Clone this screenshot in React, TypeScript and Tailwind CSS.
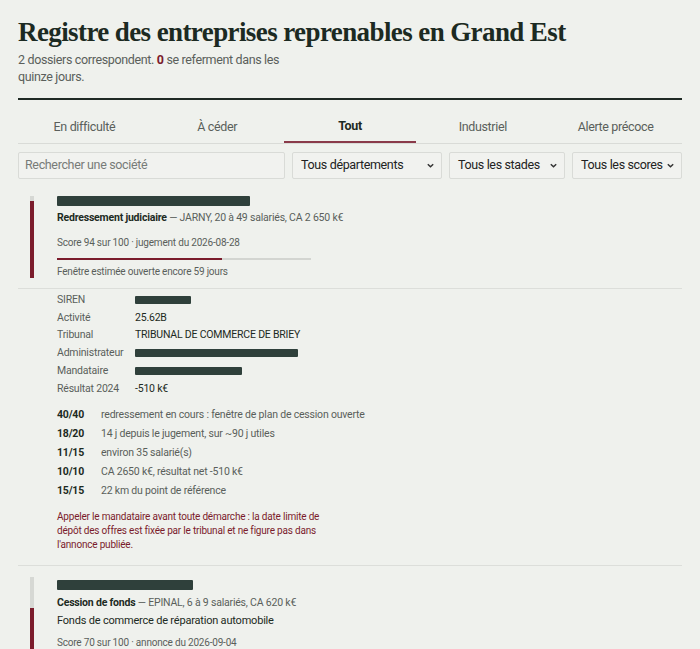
const tabs = ["En difficulté", "À céder", "Tout", "Industriel", "Alerte précoce"];

const details = [
  { label: "SIREN", redact: 56 },
  { label: "Activité", value: "25.62B" },
  { label: "Tribunal", value: "TRIBUNAL DE COMMERCE DE BRIEY" },
  { label: "Administrateur", redact: 163 },
  { label: "Mandataire", redact: 107 },
  { label: "Résultat 2024", value: "-510 k€" },
];

const scores = [
  { pts: "40/40", text: "redressement en cours : fenêtre de plan de cession ouverte" },
  { pts: "18/20", text: "14 j depuis le jugement, sur ~90 j utiles" },
  { pts: "11/15", text: "environ 35 salarié(s)" },
  { pts: "10/10", text: "CA 2650 k€, résultat net -510 k€" },
  { pts: "15/15", text: "22 km du point de référence" },
];

const Redacted = ({ width, height = 10 }: { width: number; height?: number }) => (
  <span
    className="inline-block bg-[#2f403b] rounded-[1px] align-middle"
    style={{ width, height }}
  />
);

const ScoreBar = ({ score }: { score: number }) => (
  <div className="w-[4px] ml-[12px] mr-[23px] flex flex-col shrink-0">
    <div className="bg-[#d6d8d4]" style={{ height: `${100 - score}%` }} />
    <div className="bg-[#7b1c2c] flex-1" />
  </div>
);

const Select = ({ label, width }: { label: string; width: string }) => (
  <div
    className={`${width} h-[27px] border border-[#d9dbd7] bg-[#f1f2ef] rounded-[2px] flex items-center justify-between pl-[8px] pr-[6px] text-[12.5px] tracking-[-0.35px] text-[#222] whitespace-nowrap`}
  >
    <span>{label}</span>
    <svg width="9" height="9" viewBox="0 0 10 10" fill="none">
      <path d="M2 3.5 L5 6.5 L8 3.5" stroke="#333" strokeWidth="1.6" />
    </svg>
  </div>
);

export default function App() {
  return (
    <div
      className="min-h-screen bg-[#eff1ed] px-[18px] pt-[14px] text-[#1c2a22]"
      style={{ fontFamily: "Roboto, 'Liberation Sans', sans-serif" }}
    >
      <h1
        className="text-[27px] font-bold leading-[36px] tracking-[-0.6px]"
        style={{ fontFamily: "'Liberation Serif', 'Times New Roman', serif" }}
      >
        Registre des entreprises reprenables en Grand Est
      </h1>
      <p className="mt-[1px] text-[12.5px] tracking-[-0.35px] leading-[17px] text-[#5a5f5b] max-w-[262px]">
        2 dossiers correspondent. <b className="text-[#7b1c2c] font-bold">0</b> se referment dans les quinze
        jours.
      </p>

      <div className="mt-[13px] h-[2px] bg-[#1f2a24]" />

      <div className="mt-[11px] grid grid-cols-5 border-b border-[#d9dbd7] text-[12.5px] tracking-[-0.35px]">
        {tabs.map((t) => (
          <div
            key={t}
            className={`h-[32px] flex items-center justify-center ${
              t === "Tout"
                ? "font-bold text-[#1c2a22] border-b-2 border-[#8a3a4a] -mb-px"
                : "text-[#5a5f5b]"
            }`}
          >
            {t}
          </div>
        ))}
      </div>

      <div className="mt-[8px] flex gap-[7px]">
        <div className="w-[267px] h-[27px] border border-[#d9dbd7] bg-[#f1f2ef] rounded-[2px] flex items-center px-[6px] text-[12.5px] tracking-[-0.35px] text-[#777b78]">
          Rechercher une société
        </div>
        <Select label="Tous départements" width="w-[150px]" />
        <Select label="Tous les stades" width="w-[116px]" />
        <Select label="Tous les scores" width="w-[110px]" />
      </div>

      {/* card 1 */}
      <div className="mt-[17px] flex">
        <ScoreBar score={94} />
        <div className="flex flex-col">
          <Redacted width={193} />
          <div className="mt-[5px] text-[10.5px] tracking-[-0.2px] leading-[13px] text-[#5a5f5b]">
            <b className="font-bold text-[#1c2a22]">Redressement judiciaire</b> — JARNY, 20 à 49 salariés, CA 2 650 k€
          </div>
          <div className="mt-[12px] text-[10px] tracking-[-0.2px] leading-[13px] text-[#5a5f5b]">
            Score 94 sur 100 · jugement du 2026-08-28
          </div>
          <div className="mt-[9px] w-[254px] h-[2px] bg-[#d3d5d1]">
            <div className="h-full bg-[#7b1c2c] w-[65%]" />
          </div>
          <div className="mt-[5px] text-[10px] tracking-[-0.2px] leading-[13px] text-[#5a5f5b]">
            Fenêtre estimée ouverte encore 59 jours
          </div>
        </div>
      </div>

      <div className="mt-[10px] border-t border-[#dcdeda] pl-[39px] pt-[2px] pb-[13px]">
        <div className="grid grid-cols-[78px_1fr] text-[10.5px] tracking-[-0.2px] leading-[17.7px]">
          {details.map((d) => (
            <div key={d.label} className="contents">
              <div className="text-[#5a5f5b]">{d.label}</div>
              <div className="text-[#1c2a22] flex items-center">
                {d.redact ? <Redacted width={d.redact} height={8} /> : d.value}
              </div>
            </div>
          ))}
        </div>

        <div className="mt-[8px] flex flex-col text-[10.5px] tracking-[-0.2px] leading-[19px]">
          {scores.map((s) => (
            <div key={s.pts} className="flex">
              <span className="w-[44px] font-bold text-[#1c2a22]">{s.pts}</span>
              <span className="text-[#5a5f5b]">{s.text}</span>
            </div>
          ))}
        </div>

        <p className="mt-[10px] max-w-[268px] text-[10px] tracking-[-0.2px] leading-[14px] text-[#7b1c2c]">
          Appeler le mandataire avant toute démarche : la date limite de dépôt des offres est fixée par le tribunal
          et ne figure pas dans l'annonce publiée.
        </p>
      </div>

      {/* card 2 */}
      <div className="border-t border-[#dcdeda] pt-[11px] flex">
        <ScoreBar score={70} />
        <div className="flex flex-col pt-[3px]">
          <Redacted width={136} />
          <div className="mt-[6px] text-[10.5px] tracking-[-0.2px] leading-[13px] text-[#5a5f5b]">
            <b className="font-bold text-[#1c2a22]">Cession de fonds</b> — EPINAL, 6 à 9 salariés, CA 620 k€
          </div>
          <div className="mt-[5px] text-[11px] tracking-[-0.2px] leading-[14px] text-[#1c2a22]">
            Fonds de commerce de réparation automobile
          </div>
          <div className="mt-[8px] text-[10px] tracking-[-0.2px] leading-[13px] text-[#5a5f5b]">
            Score 70 sur 100 · annonce du 2026-09-04
          </div>
          <div className="mt-[9px] w-[254px] h-[2px] bg-[#d3d5d1]">
            <div className="h-full bg-[#7b1c2c] w-[60%]" />
          </div>
          <div className="mt-[5px] text-[10px] tracking-[-0.2px] leading-[13px] text-[#5a5f5b]">
            Fenêtre estimée ouverte encore 52 jours
          </div>
        </div>
      </div>
    </div>
  );
}
